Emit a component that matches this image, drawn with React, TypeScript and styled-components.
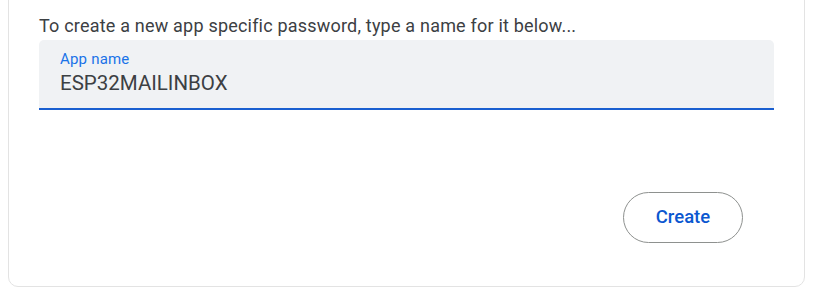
import React from "react";
import styled, { createGlobalStyle } from "styled-components";

const Global = createGlobalStyle`
  html, body { margin: 0; padding: 0; background: #fff; }
  body { font-family: Roboto, "Noto Sans", Arial, sans-serif; }
`;

const Page = styled.div`
  width: 814px;
  height: 300px;
  box-sizing: border-box;
  padding: 0 9px 0 8px;
  overflow: hidden;
`;

const Card = styled.div`
  margin-top: -20px;
  height: 307px;
  box-sizing: border-box;
  border: 1px solid #e3e3e3;
  border-radius: 0 0 10px 10px;
  padding: 33px 30px 0 30px;
  display: flex;
  flex-direction: column;
`;

const Intro = styled.p`
  margin: 0;
  font-size: 18px;
  line-height: 24px;
  letter-spacing: 0.2px;
  color: #3c4043;
`;

const Field = styled.label`
  margin-top: 2px;
  display: flex;
  flex-direction: column;
  background: #f0f2f4;
  border-radius: 5px 5px 0 0;
  border-bottom: 2px solid #1a5fd0;
  padding: 11px 21px 0 21px;
  height: 70px;
  box-sizing: border-box;
`;

const FieldLabel = styled.span`
  font-size: 15px;
  line-height: 16px;
  letter-spacing: 0.2px;
  color: #1a73e8;
`;

const FieldValue = styled.span`
  margin-top: 4px;
  font-size: 20.5px;
  line-height: 24px;
  color: #3c4043;
`;

const Actions = styled.div`
  margin-top: 82px;
  display: flex;
  justify-content: flex-end;
  padding-right: 31px;
`;

const Button = styled.button`
  width: 120px;
  height: 51px;
  border: 1px solid #8e918f;
  border-radius: 26px;
  background: #fff;
  color: #0b57d0;
  font-family: Roboto, "Noto Sans", Arial, sans-serif;
  font-size: 18.5px;
  font-weight: 500;
  padding: 0 0 2px 0;
  cursor: pointer;
`;

export default function App() {
  return (
    <>
      <Global />
      <Page>
        <Card>
          <Intro>To create a new app specific password, type a name for it below...</Intro>
          <Field>
            <FieldLabel>App name</FieldLabel>
            <FieldValue>ESP32MAILINBOX</FieldValue>
          </Field>
          <Actions>
            <Button>Create</Button>
          </Actions>
        </Card>
      </Page>
    </>
  );
}
